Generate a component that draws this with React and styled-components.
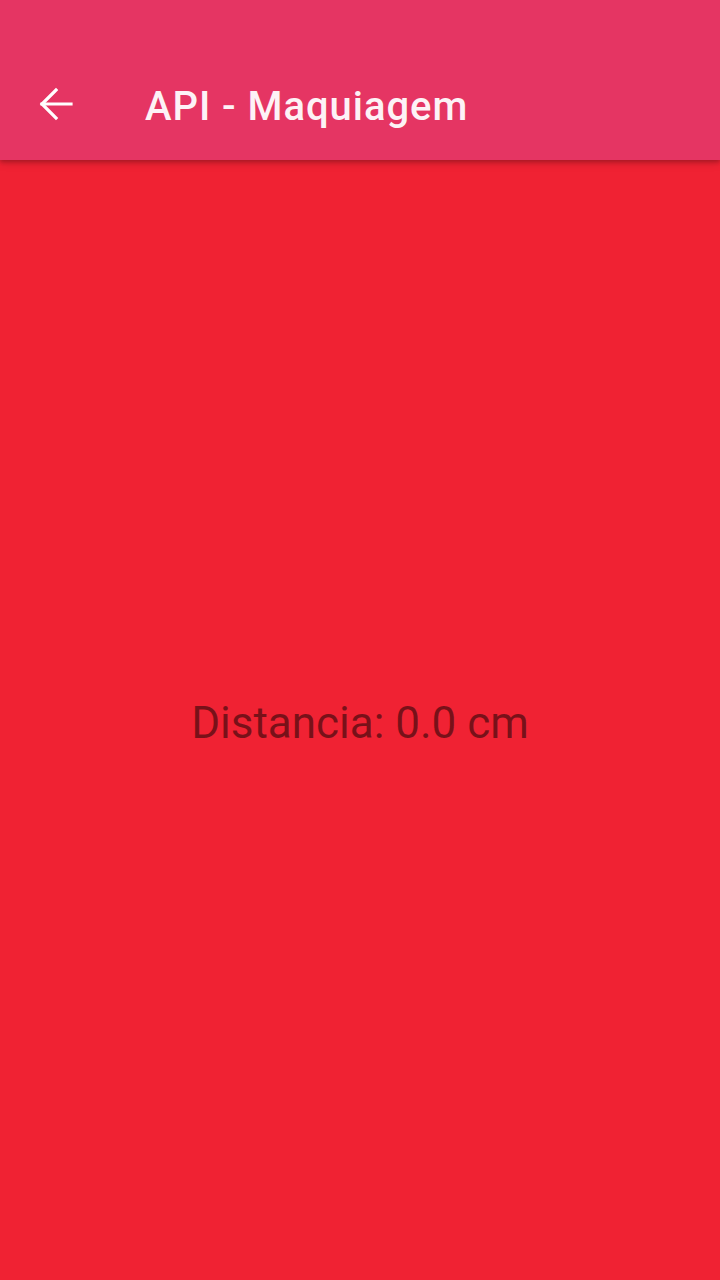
import React from "react";
import styled, { createGlobalStyle } from "styled-components";

const GlobalStyle = createGlobalStyle`
  html, body {
    margin: 0;
    padding: 0;
    height: 100%;
  }
  body {
    font-family: Roboto, "Noto Sans", sans-serif;
    background: #f02233;
  }
  #root {
    height: 100%;
  }
`;

const Screen = styled.div`
  display: flex;
  flex-direction: column;
  height: 1280px;
  background: #f02233;
`;

const AppBar = styled.header`
  position: relative;
  z-index: 1;
  height: 160px;
  padding-top: 48px;
  box-sizing: border-box;
  background: #e53563;
  box-shadow: 0 2px 4px rgba(0, 0, 0, 0.22), 0 4px 8px rgba(0, 0, 0, 0.12);
`;

const Toolbar = styled.div`
  display: flex;
  align-items: center;
  height: 112px;
`;

const BackButton = styled.button`
  display: flex;
  align-items: center;
  justify-content: center;
  width: 112px;
  height: 112px;
  padding: 0;
  border: none;
  background: transparent;
  color: #ffffff;
`;

const Title = styled.h1`
  margin: 4px 0 0 33px;
  font-family: Roboto, sans-serif;
  font-size: 40px;
  font-weight: 500;
  letter-spacing: 0.95px;
  color: #fdf2f6;
`;

const Body = styled.main`
  flex: 1;
  display: flex;
  align-items: center;
  justify-content: center;
  padding-top: 5px;
`;

const Reading = styled.p`
  margin: 0;
  font-family: Roboto, sans-serif;
  font-size: 44px;
  font-weight: 400;
  color: rgba(0, 0, 0, 0.5);
`;

function BackArrow() {
  return (
    <svg
      width="34"
      height="34"
      viewBox="0 0 34 34"
      fill="none"
      stroke="currentColor"
      strokeWidth="3.2"
      strokeLinecap="square"
    >
      <path d="M3 17H32" />
      <path d="M17 3L3 17L17 31" strokeLinejoin="miter" />
    </svg>
  );
}

export default function App() {
  return (
    <>
      <GlobalStyle />
      <Screen>
        <AppBar>
          <Toolbar>
            <BackButton aria-label="Voltar">
              <BackArrow />
            </BackButton>
            <Title>API - Maquiagem</Title>
          </Toolbar>
        </AppBar>
        <Body>
          <Reading>Distancia: 0.0 cm</Reading>
        </Body>
      </Screen>
    </>
  );
}
